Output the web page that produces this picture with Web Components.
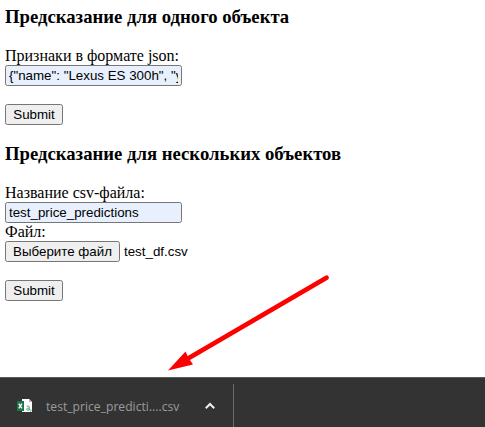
<!DOCTYPE html>
<html lang="ru">
<head>
<meta charset="utf-8">
<title>Предсказание</title>
<style>
html, body { margin: 0; height: 100%; overflow: hidden; background: #fff; }
body { font-family: "Liberation Serif", serif; font-size: 16px; color: #000; }
</style>
</head>
<body>
<prediction-page>
  <form-section heading="Предсказание для одного объекта">
    <text-field label="Признаки в формате json:" value='{"name": "Lexus ES 300h", "year": 2019}'></text-field>
  </form-section>
  <form-section heading="Предсказание для нескольких объектов">
    <text-field label="Название csv-файла:" value="test_price_predictions"></text-field>
    <file-field label="Файл:" filename="test_df.csv"></file-field>
  </form-section>
  <download-bar slot="bar"><download-item>test_price_predicti....csv</download-item></download-bar>
  <pointer-arrow slot="overlay"></pointer-arrow>
</prediction-page>
<script>
const define = (name, render) => customElements.define(name, class extends HTMLElement {
  connectedCallback() {
    if (this.shadowRoot) return;
    this.attachShadow({ mode: "open" }).innerHTML = render(this);
    this.ready();
  }
  ready() {
    const input = this.shadowRoot.querySelector("input");
    if (input) input.value = this.getAttribute("value");
  }
});

const buttonStyle = `
  button { box-sizing: border-box; height: 21px; padding: 0; border: 1px solid #767676;
    border-radius: 2.5px; background: #efefef; color: #000; white-space: nowrap;
    font: 13.333px/17px "Liberation Sans", Arial, sans-serif; }`;

define("action-button", () => `
  <style>:host { display: block; height: 21px; } ${buttonStyle} button { display: block; width: 58px; }</style>
  <button type="button"><slot></slot></button>`);

define("form-section", el => `
  <style>
    :host { display: flex; flex-direction: column; }
    h3 { margin: 0 0 19px; font-size: 18.72px; line-height: 22px; font-weight: bold; white-space: nowrap; }
    action-button { margin-top: 18px; }
  </style>
  <h3>${el.getAttribute("heading")}</h3>
  <slot></slot>
  <action-button>Submit</action-button>`);

define("text-field", el => `
  <style>
    :host { display: block; }
    label { display: block; line-height: 18px; }
    input { display: block; box-sizing: border-box; width: 177px; height: 21px; margin: 0; padding: 1px 3px;
      border: 1px solid #767676; border-radius: 2.5px; background: #e8f0fe; color: #000; outline: 0;
      font: 13.333px/17px "Liberation Sans", Arial, sans-serif; }
  </style>
  <label>${el.getAttribute("label")}</label><input type="text">`);

define("file-field", el => `
  <style>
    :host { display: block; }
    label { display: block; line-height: 18px; }
    .row { display: flex; align-items: center; gap: 4px; height: 21px;
      font: 13.333px/17px "Liberation Sans", Arial, sans-serif; }
    ${buttonStyle} button { width: 115px; }
  </style>
  <label>${el.getAttribute("label")}</label>
  <div class="row"><button type="button">Выберите файл</button><span>${el.getAttribute("filename")}</span></div>`);

define("download-item", () => `
  <style>
    :host { display: flex; align-items: center; box-sizing: border-box; width: 234px; height: 43px;
      padding: 1px 0 0 17px; border-right: 1px solid #6b6b6b; }
    .name { width: 158px; margin-left: 13px; padding-top: 2px; color: #9b9b9b; white-space: nowrap;
      font: 12.15px/18px "Open Sans", "Noto Sans", sans-serif; }
    svg { display: block; flex: none; }
  </style>
  <svg width="16" height="16" viewBox="0 0 16 16">
    <path d="M5 1h7l3 3v10H5z" fill="#fff"/>
    <path d="M12 1l3 3h-3z" fill="#b5b5b5"/>
    <path d="M9.7 8.2q2.6-1 2.6 1v3.2M12.2 10q-2.6-.1-2.6 1.3 0 1.1 1.3 1t1.4-1.2M14 11.5v1.2l-.6 1" fill="none" stroke="#59a77b" stroke-width="1"/>
    <path d="M0 3h7v10H0z" fill="#18764a"/>
    <path d="M1.8 5.7l3.2 4.6M5 5.7l-3.2 4.6" stroke="#fff" stroke-width="1.3"/>
  </svg>
  <span class="name"><slot></slot></span>
  <svg width="12" height="8" viewBox="0 0 12 8"><path d="M1.8 6.2L6 2l4.2 4.2" fill="none" stroke="#f1f1f1" stroke-width="2"/></svg>`);

define("download-bar", () => `
  <style>:host { display: flex; align-items: flex-end; box-sizing: border-box; height: 50px;
    border-top: 1px solid #5a5a5a; background: #333; }</style>
  <slot></slot>`);

define("pointer-arrow", () => `
  <style>:host { position: absolute; left: 160px; top: 270px; width: 180px; height: 110px; pointer-events: none; }
    svg { display: block; }</style>
  <svg width="180" height="110" viewBox="0 0 180 110">
    <path d="M166.5 7.7L28 88.5" stroke="#f00" stroke-width="4.8" stroke-linecap="round"/>
    <path d="M8 100.5L25.5 81.5L28 87L33 94.5z" fill="#f00"/>
  </svg>`);

define("prediction-page", () => `
  <style>
    :host { display: flex; flex-direction: column; position: relative; height: 427px; overflow: hidden; }
    main { flex: 1; display: flex; flex-direction: column; gap: 18px; padding: 6px 5px 0; }
  </style>
  <main><slot></slot></main>
  <slot name="bar"></slot>
  <slot name="overlay"></slot>`);
</script>
</body>
</html>
